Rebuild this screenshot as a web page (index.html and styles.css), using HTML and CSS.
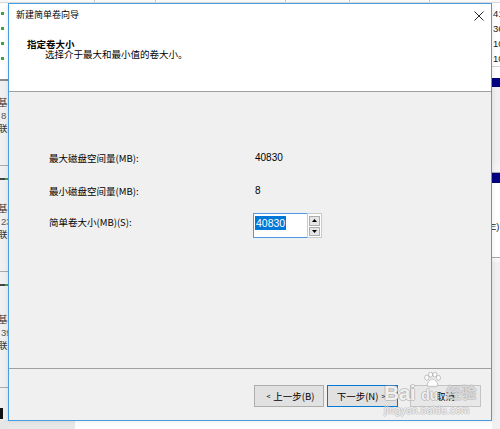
FILE: index.html
```html
<!DOCTYPE html>
<html lang="zh-CN">
<head>
<meta charset="utf-8">
<title>新建简单卷向导</title>
<link rel="stylesheet" href="styles.css">
</head>
<body>
<div class="desktop">
  <div class="strip strip-left">
    <div class="hdr"></div>
    <div class="list">
      <div class="li"><span class="dot"></span></div>
      <div class="li"><span class="dot"></span></div>
      <div class="li"><span class="dot"></span></div>
      <div class="li"><span class="dot"></span></div>
    </div>
    <div class="sb"></div>
    <div class="gap8"></div>
    <div class="disk d1"><div class="dt">基本</div><div class="dt num">8</div><div class="dt">联机</div></div>
    <div class="bar"></div>
    <div class="disk d2"><div class="dt">基本</div><div class="dt num">23</div><div class="dt">联机</div></div>
    <div class="bar"></div>
    <div class="disk d3"><div class="dt">基本</div><div class="dt num">39</div><div class="dt">联机</div></div>
    <div class="legend"><span class="blk"></span></div>
    <div class="foot-l"></div>
  </div>
  <div class="mid">
    <div class="cols"><span class="c c1"></span><span class="c c2"></span><span class="c c3"></span><span class="c c4"></span><span class="c c5"></span></div>
    <div class="fill"></div>
    <div class="bottom"><span class="bl"></span></div>
  </div>
  <div class="strip strip-right">
    <div class="hdr"></div>
    <div class="list rlist">
      <div class="li r">41</div>
      <div class="li r">36</div>
      <div class="li r">10</div>
      <div class="li r">10</div>
    </div>
    <div class="rgap"></div>
    <div class="navy n1"></div>
    <div class="rpanel"></div>
    <div class="navy n2"></div>
    <div class="rpanel2"><span class="etext">E)</span></div>
    <div class="rpanel3"></div>
  </div>

  <div class="dialog">
    <div class="titlebar">
      <span class="title">新建简单卷向导</span>
      <svg class="close" width="10" height="10" viewBox="0 0 10 10"><path d="M0.5 0.5 L9.5 9.5 M9.5 0.5 L0.5 9.5" stroke="#2b2b2b" stroke-width="1" fill="none"/></svg>
    </div>
    <div class="header">
      <div class="heading">指定卷大小</div>
      <div class="subtitle">选择介于最大和最小值的卷大小。</div>
    </div>
    <div class="content">
      <div class="row r1"><span class="label">最大磁盘空间量(MB):</span><span class="value">40830</span></div>
      <div class="row r2"><span class="label">最小磁盘空间量(MB):</span><span class="value">8</span></div>
      <div class="row r3">
        <span class="label lab3">简单卷大小(MB)(S):</span>
        <div class="spinner">
          <div class="edit"><span class="sel">40830</span></div>
          <div class="spin">
            <span class="sbtn"><svg width="5" height="3" viewBox="0 0 5 3"><path d="M2.5 0 L5 3 L0 3 Z" fill="#000"/></svg></span>
            <span class="sbtn"><svg width="5" height="3" viewBox="0 0 5 3"><path d="M0 0 L5 0 L2.5 3 Z" fill="#000"/></svg></span>
          </div>
        </div>
      </div>
    </div>
    <div class="footer">
      <button class="btn back"><span class="arr">&lt;</span> 上一步(B)</button>
      <button class="btn next">下一步(N) <span class="arr">&gt;</span></button>
      <button class="btn cancel">取消</button>
    </div>
  </div>

  <div class="watermark">
    <div class="wm-logo">
      <span class="wm-bai">Bai</span>
      <span class="wm-du-col">
        <svg class="paw" width="19" height="16" viewBox="0 0 20 17"><g fill="rgba(255,255,255,0.8)" stroke="rgba(110,110,110,0.45)" stroke-width="0.9"><ellipse cx="4" cy="6" rx="2.3" ry="2.8"/><ellipse cx="8" cy="2.8" rx="2.2" ry="2.6"/><ellipse cx="12.5" cy="2.8" rx="2.2" ry="2.6"/><ellipse cx="16.3" cy="6.2" rx="2.2" ry="2.7"/><path d="M10 7.5 C7 7.5 4 12 4.5 14 C5 16.5 8 15.5 10 15.5 C12 15.5 15 16.5 15.5 14 C16 12 13 7.5 10 7.5 Z"/></g></svg>
        <span class="wm-du">du</span>
      </span>
      <span class="wm-cn">经验</span>
    </div>
    <div class="wm-url">jingyan.baidu.com</div>
  </div>
</div>
</body>
</html>
```

FILE: styles.css
```css
* { box-sizing: border-box; margin: 0; padding: 0; }

html, body {
  width: 500px;
  height: 429px;
  overflow: hidden;
}

body {
  background: #ffffff;
  font-family: "Noto Sans CJK SC", "Noto Sans", sans-serif;
  font-size: 9.5px;
  color: #000;
}

.desktop {
  position: relative;
  width: 500px;
  height: 429px;
  display: grid;
  grid-template-columns: 8px 1fr 8px;
  grid-template-rows: 429px;
  background: #f0f0f0;
  overflow: hidden;
}

/* ---------- background window fragments ---------- */
.strip {
  display: flex;
  flex-direction: column;
  overflow: hidden;
  font-size: 9.5px;
  color: #333;
}

.hdr {
  height: 3px;
  flex: none;
  background: #f7f7f7;
  border-bottom: 1px solid #d9d9d9;
}

.list {
  height: 76px;
  flex: none;
  background: #fff;
  padding-top: 3px;
}

.rlist { height: 63px; }

.li {
  height: 15px;
  display: flex;
  align-items: center;
  line-height: 15px;
}

.dot {
  width: 3px;
  height: 3px;
  margin-left: 1px;
  background: #3aa63a;
}

.li.r {
  padding-left: 1px;
  color: #222;
  font-family: "Liberation Sans", sans-serif;
  font-size: 9.5px;
  white-space: nowrap;
}

.sb {
  height: 2px;
  flex: none;
  background: #8a8a8a;
}

.gap8 {
  height: 9px;
  flex: none;
  background: #f0f0f0;
}

.disk {
  flex: none;
  background: #f0f0f0;
  border-bottom: 1px solid #a9a9a9;
  white-space: nowrap;
  margin-left: -2px;
}

.d1 { height: 76px; padding-top: 6px; }
.d2 { height: 80px; padding-top: 10px; margin-top: 12px; }
.d3 { height: 90px; padding-top: 15px; margin-top: 12px; }

.dt {
  line-height: 13px;
  height: 13px;
  color: #333;
}

.dt.num {
  font-family: "Liberation Sans", sans-serif;
  padding-left: 3px;
  color: #555;
}

.bar {
  height: 2px;
  flex: none;
  margin-top: 12px;
  background: linear-gradient(90deg, #444 0 5px, #3aa63a 5px);
}

.legend {
  height: 32px;
  flex: none;
  padding-top: 20px;
  background: #f0f0f0;
}

.blk {
  display: block;
  width: 3px;
  height: 11px;
  background: #111;
}

.foot-l {
  flex: 1;
  background: #e6e6e6;
}

.mid {
  display: flex;
  flex-direction: column;
}

.cols {
  height: 3px;
  display: flex;
  background: #fff;
  border-bottom: 1px solid #e5e5e5;
}

.c { border-right: 1px solid #cfcfcf; }
.c1 { width: 87px; }
.c2 { width: 61px; }
.c3 { width: 130px; }
.c4 { width: 64px; }
.c5 { width: 80px; }

.fill { flex: 1; }

.bottom {
  height: 8px;
  display: flex;
  background: #fff;
}

.bl {
  width: 67px;
  background: #e8e8e8;
}

.rgap {
  height: 12px;
  flex: none;
  background: #fff;
  border-top: 1px solid #d0d0d0;
}

.navy {
  flex: none;
  background: #000080;
}

.n1 { height: 9px; }
.n2 { height: 10px; }

.rpanel {
  height: 86px;
  flex: none;
  background: #f0f0f0;
  border-bottom: 1px solid #a9a9a9;
  box-shadow: inset 0 -9px 0 #f4f4f4;
}

.rpanel2 {
  height: 75px;
  flex: none;
  background: #fff;
  border-bottom: 1px solid #a9a9a9;
  padding-top: 36px;
  white-space: nowrap;
}

.etext {
  font-family: "Liberation Sans", sans-serif;
  font-size: 9.5px;
  margin-left: -2px;
  color: #222;
}

.rpanel3 {
  flex: 1;
  background: #f0f0f0;
  border-top: 4px solid #f7f7f7;
}

/* ---------- dialog (window on desktop) ---------- */
.dialog {
  position: absolute;
  left: 8px;
  top: 3px;
  width: 484px;
  height: 418px;
  border: 1px solid #4a9be2;
  background: #f0f0f0;
  display: flex;
  flex-direction: column;
  box-shadow: 0 0 5px rgba(0, 0, 0, 0.1);
}

.titlebar {
  height: 24px;
  flex: none;
  background: #fff;
  display: flex;
  align-items: flex-start;
  justify-content: space-between;
  padding: 0 7px 0 7px;
}

.title {
  line-height: 22px;
  font-size: 9px;
  color: #000;
}

.close {
  margin-top: 7px;
  display: block;
}

.header {
  height: 64px;
  flex: none;
  background: #fff;
  border-bottom: 1px solid #a0a0a0;
  padding: 11px 0 0 18px;
}

.heading {
  font-weight: bold;
  line-height: 10px;
}

.subtitle {
  line-height: 10px;
  padding-left: 18px;
}

.content {
  flex: 1;
  padding: 59px 0 0 40px;
}

.row {
  display: flex;
  align-items: flex-start;
}

.r2 { margin-top: 19px; }
.r3 { margin-top: 15px; }

.label {
  width: 206px;
  flex: none;
  line-height: 14px;
  color: #000;
}

.lab3 { padding-top: 2px; }

.value {
  line-height: 14px;
  font-family: "Liberation Sans", sans-serif;
  font-size: 10px;
}

.spinner {
  display: flex;
  margin-left: -2px;
  height: 25px;
}

.edit {
  width: 54px;
  height: 25px;
  background: #fff;
  border: 1px solid #4a9be2;
  border-right: none;
  padding: 2px 0 0 1px;
}

.sel {
  display: inline-block;
  background: #0078d7;
  color: #fff;
  font-family: "Liberation Sans", sans-serif;
  font-size: 10.5px;
  line-height: 14px;
  padding: 0 1px;
}

.spin {
  width: 15px;
  height: 25px;
  background: #fff;
  border: 1px solid #c9c9c9;
  display: flex;
  flex-direction: column;
  gap: 1px;
  padding: 2px 1px 1px 1px;
}

.sbtn {
  height: 10px;
  background: #e5e5e5;
  border: 1px solid #adadad;
  display: flex;
  align-items: center;
  justify-content: center;
}

.sbtn svg { display: block; }

.footer {
  height: 52px;
  flex: none;
  border-top: 1px solid #a0a0a0;
  display: flex;
  justify-content: flex-end;
  align-items: flex-start;
  padding: 16px 10px 0 0;
}

.btn {
  width: 71px;
  height: 22px;
  background: #e1e1e1;
  border: 1px solid #adadad;
  font-family: "Noto Sans CJK SC", "Noto Sans", sans-serif;
  font-size: 9.5px;
  color: #000;
  display: flex;
  align-items: center;
  justify-content: center;
}

.back { width: 70px; }
.next {
  margin-left: 3px;
  border-color: #0078d7;
}
.cancel {
  margin-left: 12px;
  background: #e8e8e8;
  border-color: #c4c4c4;
}

.arr {
  font-size: 7px;
  margin: 0 3px;
}

/* ---------- watermark overlay ---------- */
.watermark {
  position: absolute;
  left: 384px;
  top: 373px;
  pointer-events: none;
}

.wm-logo {
  display: flex;
  align-items: flex-end;
  height: 32px;
}

.wm-bai,
.wm-du {
  font-family: "Liberation Sans", sans-serif;
  font-weight: bold;
  color: rgba(255, 255, 255, 0.85);
  text-shadow:
    1px 0 0 rgba(150, 150, 150, 0.45),
    -1px 0 0 rgba(150, 150, 150, 0.45),
    0 1px 0 rgba(150, 150, 150, 0.45),
    0 -1px 0 rgba(150, 150, 150, 0.45);
}

.wm-bai {
  font-size: 21px;
  line-height: 24px;
  letter-spacing: -0.5px;
}

.wm-du-col {
  display: flex;
  flex-direction: column;
  align-items: center;
  margin-left: 2px;
}

.paw { display: block; margin-left: 6px; }

.wm-du {
  font-size: 14px;
  line-height: 14px;
  margin-bottom: 3px;
}

.wm-cn {
  font-family: "Noto Sans CJK SC", sans-serif;
  font-weight: bold;
  font-size: 15px;
  line-height: 22px;
  margin-left: 4px;
  margin-bottom: 2px;
  color: rgba(255, 255, 255, 0.55);
  text-shadow:
    1px 0 0 rgba(150, 150, 150, 0.35),
    -1px 0 0 rgba(150, 150, 150, 0.35),
    0 1px 0 rgba(150, 150, 150, 0.35),
    0 -1px 0 rgba(150, 150, 150, 0.35);
}

.wm-url {
  font-family: "Liberation Sans", sans-serif;
  font-size: 10px;
  line-height: 11px;
  color: rgba(255, 255, 255, 0.75);
  text-shadow:
    1px 0 0 rgba(150, 150, 150, 0.35),
    -1px 0 0 rgba(150, 150, 150, 0.35),
    0 1px 0 rgba(150, 150, 150, 0.35),
    0 -1px 0 rgba(150, 150, 150, 0.35);
  letter-spacing: 0.3px;
}
```
